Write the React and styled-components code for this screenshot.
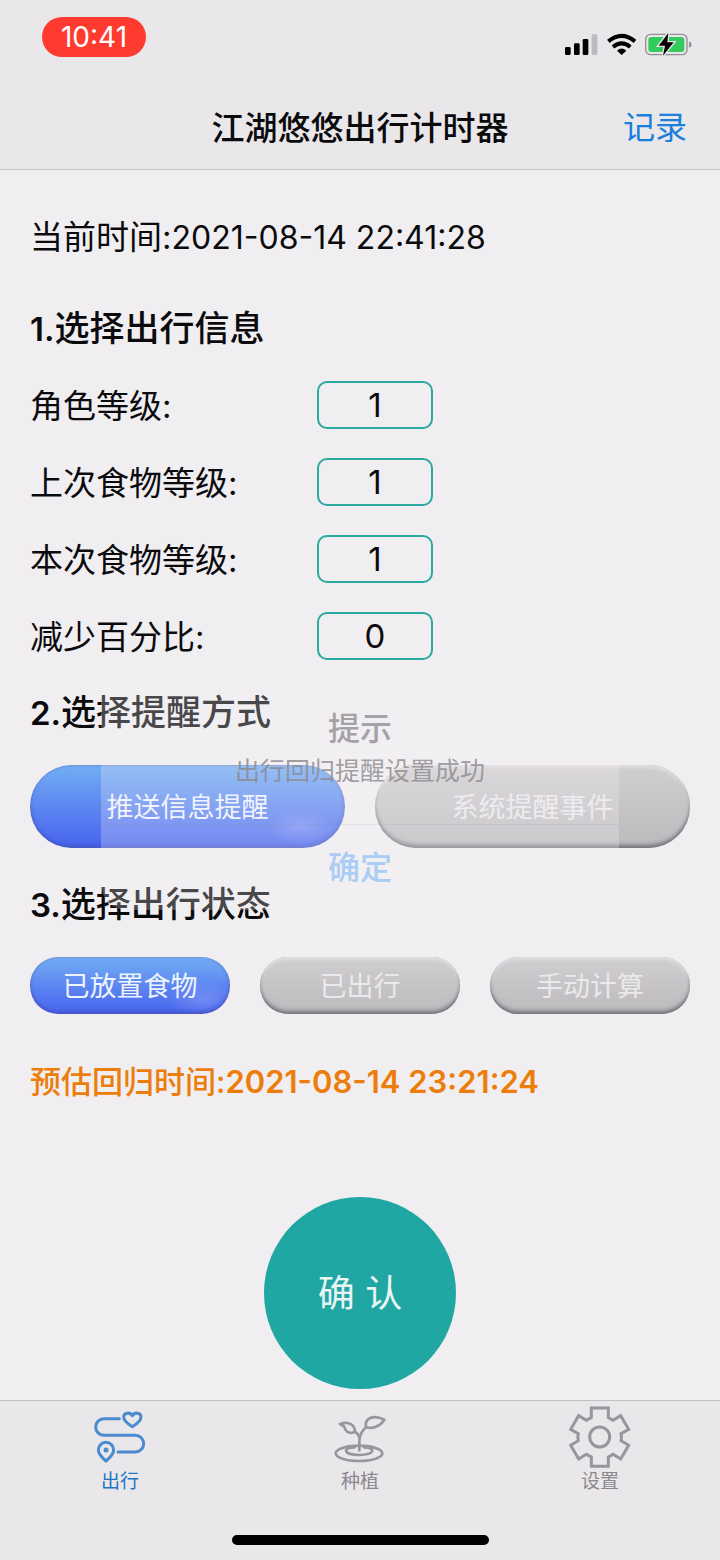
import { useState } from 'react';
import styled, { createGlobalStyle } from 'styled-components';

const GlobalStyle = createGlobalStyle`
  * {
    box-sizing: border-box;
  }

  body {
    margin: 0;
    background: #f0eef1;
    color: #0b0b0d;
    font-family: Inter, 'Noto Sans CJK SC', sans-serif;
  }

  button,
  input {
    font-family: inherit;
  }
`;

const Page = styled.div`
  display: flex;
  flex-direction: column;
  min-height: 100vh;
`;

const Header = styled.header`
  background: #e9e7ea;
  border-bottom: 1px solid #c2c0c3;
`;

const StatusBar = styled.div`
  display: flex;
  justify-content: space-between;
  align-items: flex-start;
  height: 88px;
  padding: 17px 28px 0 42px;
`;

const Clock = styled.time`
  width: 104px;
  border-radius: 20px;
  background: #ff3b30;
  color: #fff;
  font-size: 28px;
  line-height: 40px;
  text-align: center;
`;

const StatusIcons = styled.div`
  display: flex;
  gap: 9px;
  padding-top: 16px;
`;

const NavBar = styled.div`
  display: grid;
  grid-template-columns: 1fr auto 1fr;
  align-items: center;
  height: 81px;
  padding: 0 33px 2px;
`;

const NavTitle = styled.h1`
  grid-column: 2;
  margin: 0;
  font-size: 33px;
  font-weight: 500;
  line-height: 48px;
`;

const NavLink = styled.a`
  justify-self: end;
  color: #1b7fdc;
  font-size: 32px;
  line-height: 48px;
  text-decoration: none;
`;

const Main = styled.main`
  display: flex;
  flex: 1;
  flex-direction: column;
  padding: 43px 30px 11px;
`;

const CurrentTime = styled.p`
  margin: 0 0 43px;
  font-size: 33px;
  line-height: 48px;

  time {
    font-size: 32px;
    line-height: 1;
  }
`;

const SectionTitle = styled.h2`
  margin: 0;
  font-size: 35px;
  font-weight: 500;
  line-height: 48px;

  span {
    font-size: 33px;
    font-weight: 600;
    line-height: 1;
  }
`;

const Fields = styled.div`
  display: grid;
  gap: 29px;
  padding: 28px 0 29px;
`;

const Field = styled.div`
  display: grid;
  grid-template-columns: 287px 116px;
  align-items: center;
  height: 48px;

  label {
    padding-bottom: 2px;
    font-size: 33px;
  }

  input {
    width: 100%;
    height: 48px;
    padding: 0;
    border: 2px solid #2aa9a1;
    border-radius: 10px;
    background: transparent;
    color: #0b0b0d;
    font-size: 33px;
    text-align: center;
  }
`;

const Options = styled.div`
  display: grid;
  grid-auto-columns: 1fr;
  grid-auto-flow: column;
  gap: 30px;
  padding: 29px 0 32px;
`;

const Option = styled.button`
  height: ${({ $large }) => ($large ? 83 : 57)}px;
  padding: 0 0 2px;
  border: 0;
  border-radius: ${({ $large }) => ($large ? 42 : 28)}px;
  background: ${({ $active }) =>
    $active
      ? 'radial-gradient(ellipse 34px 18px at 86% 74%, #8d9cf688, #8d9cf600), linear-gradient(#72aef3, #5b83f1 55%, #4764ee)'
      : 'linear-gradient(#d0ced1, #bcbabd)'};
  box-shadow: ${({ $active }) =>
    $active
      ? 'inset 0 -3px 4px -1px #3b4fbdcc, inset 0 0 2px 1px #716fa266'
      : 'inset 0 -4px 4px -1px #777579, inset 0 3px 3px #e0dee1, inset 0 0 2px 1px #77757966'};
  color: ${({ $active }) => ($active ? '#eef3fd' : '#ebe9ec')};
  font-size: 27px;
`;

const Estimate = styled.p`
  margin: 12px 0 0;
  color: #ed7d0b;
  font-size: 31px;
  font-weight: 500;
  line-height: 48px;

  time {
    font-weight: 600;
  }
`;

const Confirm = styled.button`
  align-self: center;
  width: 192px;
  height: 192px;
  margin-top: auto;
  padding: 0 0 4px;
  border: 0;
  border-radius: 50%;
  background: #20a7a3;
  color: #e9f5f5;
  font-size: 37px;
`;

const TabBar = styled.nav`
  display: grid;
  grid-template-columns: repeat(3, 1fr);
  height: 135px;
  padding-top: 4px;
  border-top: 1px solid #c2c0c3;
  background: #e9e7ea;
`;

const Tab = styled.a`
  display: flex;
  flex-direction: column;
  align-items: center;
  color: ${({ $active }) => ($active ? '#2274c6' : '#8b898d')};
  font-size: 19px;
  line-height: 26px;
  text-decoration: none;

  svg {
    color: ${({ $active }) => ($active ? '#4a8ad0' : '#98969a')};
  }
`;

const HomeArea = styled.div`
  display: flex;
  justify-content: center;
  height: 25px;
  background: #e9e7ea;
`;

const HomeIndicator = styled.div`
  width: 257px;
  height: 10px;
  border-radius: 5px;
  background: #000;
`;

const Backdrop = styled.div`
  position: absolute;
  inset: 0;
  display: flex;
  justify-content: center;
  align-items: center;
  padding-top: 20px;
`;

const Dialog = styled.div`
  width: 72%;
  border-radius: 26px;
  background: rgba(246, 245, 249, 0.26);
  text-align: center;
`;

const DialogTitle = styled.h3`
  margin: 0;
  padding-top: 36px;
  color: #a4a2a6;
  font-size: 32px;
  font-weight: 500;
  line-height: 46px;
`;

const DialogText = styled.p`
  margin: 0;
  padding-bottom: 34px;
  color: #8a888ccc;
  font-size: 25px;
  line-height: 38px;
`;

const DialogButton = styled.button`
  width: 100%;
  height: 86px;
  padding: 0 0 6px;
  border: 0;
  border-top: 1px solid #8080901c;
  background: transparent;
  color: #a9cdf4;
  font-size: 32px;
  font-weight: 500;
`;

const SignalIcon = () => (
  <svg width="33" height="23" viewBox="74 38 99 69">
    <rect x="74" y="80" width="17" height="24" rx="4" />
    <rect x="101" y="69" width="17" height="35" rx="4" />
    <rect x="127" y="56" width="17" height="48" rx="4" />
    <rect x="154" y="42" width="17" height="62" rx="4" fill="#bdbbbf" />
  </svg>
);

const WifiIcon = () => (
  <svg width="29" height="23" viewBox="201 38 87 69">
    <g fill="none" stroke="#000" strokeWidth="12">
      <path d="M205 63 Q245 30 285 63" />
      <path d="M219 80 Q245 58 271 80" />
    </g>
    <path d="M231 91 Q245 78 259 91 L245 104Z" />
  </svg>
);

const BatteryIcon = () => (
  <svg width="47" height="23" viewBox="318 38 141 69">
    <rect x="320" y="42" width="124" height="61" rx="15" fill="none" stroke="#929094" strokeWidth="4" />
    <path d="M450 63 Q458 65 458 73 Q458 80 450 82Z" fill="#929094" />
    <rect x="328" y="50" width="108" height="45" rx="9" fill="#33cb5c" />
    <path
      d="M388 38 L359 76 H378 L372 106 L404 66 H385Z"
      stroke="#e9e7ea"
      strokeWidth="8"
      paintOrder="stroke"
    />
  </svg>
);

const TabIcon = ({ children }) => (
  <svg
    width="64"
    height="64"
    viewBox="54 15 192 192"
    fill="none"
    stroke="currentColor"
    strokeWidth="9"
    strokeLinecap="round"
    strokeLinejoin="round"
  >
    {children}
  </svg>
);

const RouteIcon = () => (
  <TabIcon>
    <path d="M148 56 H102 A25 25 0 0 0 102 106 H196 A25 25 0 0 1 196 156 H144" />
    <path d="M187 80 C169 69 161 61 161 51 C161 38 180 35 187 47 C194 35 213 38 213 51 C213 61 205 69 187 80Z" />
    <path d="M108 183 C95 172 85 161 85 150 A23 23 0 0 1 131 150 C131 161 121 172 108 183Z" />
    <circle cx="108" cy="150" r="3" fill="currentColor" />
  </TabIcon>
);

const PlantIcon = () => (
  <TabIcon>
    <g strokeWidth="8">
      <ellipse cx="147" cy="160" rx="70" ry="23" />
      <path d="M134 142 C98 143 97 164 147 165 C197 164 198 143 162 142" />
      <path d="M148 151 V124 C148 108 154 94 168 82" />
      <path d="M148 112 C146 104 141 99 135 95" />
      <path d="M168 81 C163 56 188 42 223 59 C210 79 188 89 168 81Z" />
      <path d="M90 72 C118 62 137 76 134 97 C111 103 106 91 102 79Z" />
    </g>
  </TabIcon>
);

const GearIcon = () => (
  <TabIcon>
    <path
      strokeLinejoin="miter"
      d="M124 24 H175 V53 L189 61 L212 47 L236 88 L213 101 Q216 111 213 122 L236 136 L212 177 L189 163 L175 171 V199 H124 V171 L109 163 L86 177 L62 136 L85 122 Q82 111 85 101 L62 88 L86 47 L109 61 L124 53Z"
    />
    <circle cx="149" cy="111" r="30" />
  </TabIcon>
);

const fields = [
  { id: 'role', label: '角色等级:', value: '1' },
  { id: 'lastFood', label: '上次食物等级:', value: '1' },
  { id: 'food', label: '本次食物等级:', value: '1' },
  { id: 'percent', label: '减少百分比:', value: '0' },
];

const remindTypes = ['推送信息提醒', '系统提醒事件'];
const tripStates = ['已放置食物', '已出行', '手动计算'];

const tabs = [
  { label: '出行', icon: <RouteIcon /> },
  { label: '种植', icon: <PlantIcon /> },
  { label: '设置', icon: <GearIcon /> },
];

const App = () => {
  const [remind, setRemind] = useState(0);
  const [trip, setTrip] = useState(0);
  const [open, setOpen] = useState(true);

  return (
    <Page>
      <GlobalStyle />
      <Header>
        <StatusBar>
          <Clock>10:41</Clock>
          <StatusIcons>
            <SignalIcon />
            <WifiIcon />
            <BatteryIcon />
          </StatusIcons>
        </StatusBar>
        <NavBar>
          <NavTitle>江湖悠悠出行计时器</NavTitle>
          <NavLink href="#records">记录</NavLink>
        </NavBar>
      </Header>

      <Main>
        <CurrentTime>
          当前时间:<time>2021-08-14 22:41:28</time>
        </CurrentTime>

        <SectionTitle>
          <span>1.</span>选择出行信息
        </SectionTitle>
        <Fields>
          {fields.map((field) => (
            <Field key={field.id}>
              <label htmlFor={field.id}>{field.label}</label>
              <input id={field.id} inputMode="numeric" defaultValue={field.value} />
            </Field>
          ))}
        </Fields>

        <SectionTitle>
          <span>2.</span>选择提醒方式
        </SectionTitle>
        <Options>
          {remindTypes.map((name, index) => (
            <Option key={name} type="button" $large $active={index === remind} onClick={() => setRemind(index)}>
              {name}
            </Option>
          ))}
        </Options>

        <SectionTitle>
          <span>3.</span>选择出行状态
        </SectionTitle>
        <Options>
          {tripStates.map((name, index) => (
            <Option key={name} type="button" $active={index === trip} onClick={() => setTrip(index)}>
              {name}
            </Option>
          ))}
        </Options>

        <Estimate>
          预估回归时间:<time>2021-08-14 23:21:24</time>
        </Estimate>
        <Confirm type="button" onClick={() => setOpen(true)}>
          确 认
        </Confirm>
      </Main>

      <TabBar>
        {tabs.map((tab, index) => (
          <Tab key={tab.label} href={`#tab${index}`} $active={index === 0}>
            {tab.icon}
            {tab.label}
          </Tab>
        ))}
      </TabBar>
      <HomeArea>
        <HomeIndicator />
      </HomeArea>

      {open && (
        <Backdrop>
          <Dialog role="dialog" aria-labelledby="dialog-title">
            <DialogTitle id="dialog-title">提示</DialogTitle>
            <DialogText>出行回归提醒设置成功</DialogText>
            <DialogButton type="button" onClick={() => setOpen(false)}>
              确定
            </DialogButton>
          </Dialog>
        </Backdrop>
      )}
    </Page>
  );
};

export default App;
